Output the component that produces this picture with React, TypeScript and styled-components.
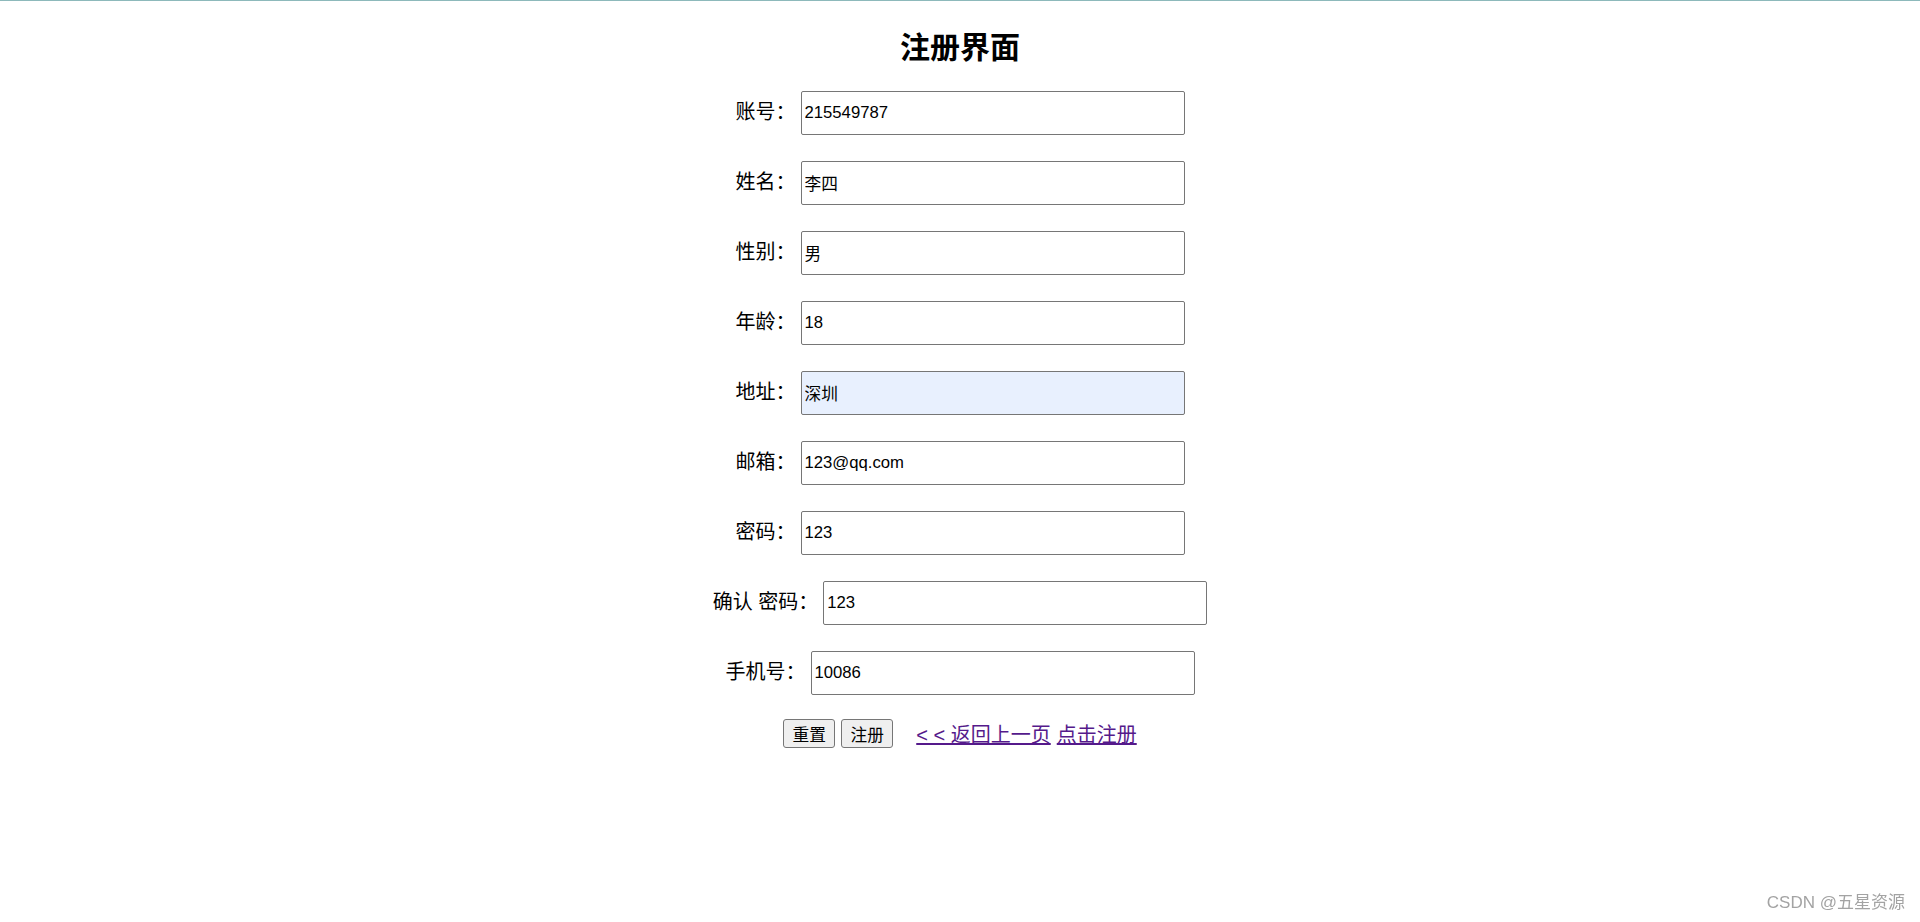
import React from "react";
import styled, { createGlobalStyle } from "styled-components";

const GlobalStyle = createGlobalStyle`
  html, body {
    margin: 0;
    padding: 0;
    background: #ffffff;
  }
  body {
    font-family: "Liberation Sans", "Noto Sans CJK SC", sans-serif;
    color: #000000;
    border-top: 1px solid #8db9bb;
  }
`;

const fields = [
  { label: "账号：", value: "215549787" },
  { label: "姓名：", value: "李四" },
  { label: "性别：", value: "男" },
  { label: "年龄：", value: "18" },
  { label: "地址：", value: "深圳", filled: true },
  { label: "邮箱：", value: "123@qq.com" },
  { label: "密码：", value: "123" },
  { label: "确认 密码：", value: "123" },
  { label: "手机号：", value: "10086" },
];

function Register() {
  return (
    <Page>
      <GlobalStyle />
      <Title>注册界面</Title>
      <Form>
        {fields.map((f) => (
          <Row key={f.label}>
            <Label>{f.label}</Label>
            <Input type="text" defaultValue={f.value} $filled={f.filled} />
          </Row>
        ))}
        <ButtonRow>
          <Button type="reset">重置</Button>
          <Button type="submit">注册</Button>
          <Links>
            <LinkText href="#">&lt; &lt; 返回上一页</LinkText>
            <LinkText href="#">点击注册</LinkText>
          </Links>
        </ButtonRow>
      </Form>
      <Watermark>CSDN @五星资源</Watermark>
    </Page>
  );
}

const Page = styled.div`
  display: flex;
  flex-direction: column;
  align-items: center;
  padding-top: 29px;
`;
const Title = styled.h2`
  margin: 0 0 25px 0;
  height: 36px;
  line-height: 36px;
  font-size: 30px;
  font-weight: bold;
  font-family: "Liberation Sans", "Noto Sans CJK SC", sans-serif;
`;
const Form = styled.form`
  display: flex;
  flex-direction: column;
  align-items: center;
`;
const Row = styled.div`
  display: flex;
  align-items: center;
  justify-content: center;
  gap: 5px;
  height: 44px;
  margin-bottom: 26px;
`;
const Label = styled.span`
  font-size: 20px;
  white-space: pre;
  line-height: 28px;
  margin-top: -2px;
`;
const Input = styled.input<{ $filled?: boolean }>`
  box-sizing: border-box;
  width: 384px;
  height: 44px;
  padding: 0 3px;
  border: 1px solid #767676;
  border-radius: 2px;
  font-size: 16.7px;
  font-family: "Liberation Sans", "Noto Sans CJK SC", sans-serif;
  color: #000000;
  background: ${(p) => (p.$filled ? "#e8f0fe" : "#ffffff")};
  outline: none;
`;
const ButtonRow = styled.div`
  display: flex;
  align-items: center;
  justify-content: center;
  margin-top: -2px;
`;
const Button = styled.button`
  box-sizing: border-box;
  width: 52px;
  height: 29px;
  padding: 0;
  margin-right: 6px;
  border: 1px solid #767676;
  border-radius: 3px;
  background: #efefef;
  font-size: 16.7px;
  font-family: "Liberation Sans", "Noto Sans CJK SC", sans-serif;
  color: #000000;
`;
const Links = styled.span`
  display: flex;
  gap: 6px;
  margin-left: 17px;
`;
const LinkText = styled.a`
  font-size: 20px;
  color: #551a8b;
  text-decoration: underline;
  white-space: pre;
`;
const Watermark = styled.div`
  position: fixed;
  right: 15px;
  bottom: 9px;
  font-size: 17px;
  color: #a3a3a3;
  font-family: "Liberation Sans", "Noto Sans CJK SC", sans-serif;
`;

export default function App() {
  return <Register />;
}
